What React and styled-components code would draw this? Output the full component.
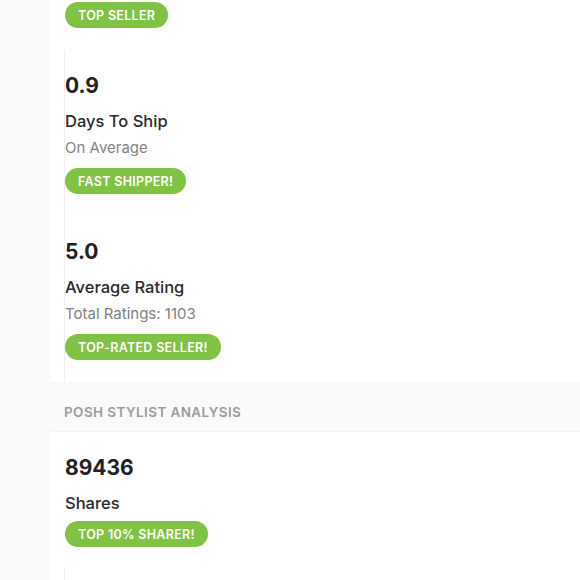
import React from "react";
import styled, { createGlobalStyle } from "styled-components";

const Global = createGlobalStyle`
  html, body { margin: 0; padding: 0; background: #fafafa; }
  body { font-family: Inter, "Open Sans", "Liberation Sans", sans-serif; color: #222; }
`;

const Page = styled.div`
  display: flex;
  min-height: 580px;
  overflow: hidden;
`;

const Gutter = styled.div`
  width: 50px;
  flex: none;
  background: #fafafa;
`;

const Main = styled.main`
  flex: 1;
  background: #fff;
  display: flex;
  flex-direction: column;
`;

const StatList = styled.div`
  display: flex;
  flex-direction: column;
  padding-left: 14px;
`;

const Stat = styled.div`
  display: flex;
  flex-direction: column;
  align-items: flex-start;
  padding: ${(p) => (p.$partial ? "2px 0 22px" : "22px 0")};
  border-left: 1px solid ${(p) => (p.$divider ? "#eeeeee" : "transparent")};
`;

const Value = styled.div`
  font-size: 21px;
  line-height: 28px;
  font-weight: 700;
  color: #222;
`;

const Label = styled.div`
  margin-top: 9px;
  font-size: 16.5px;
  line-height: 24px;
  font-weight: 500;
  color: #2a2a2a;
`;

const Sub = styled.div`
  margin-top: 5px;
  font-size: 15px;
  line-height: 20px;
  color: #808080;
`;

const Badge = styled.span`
  margin-top: ${(p) => p.$gap}px;
  display: inline-flex;
  align-items: center;
  height: 26px;
  padding: 0 13px;
  border-radius: 13px;
  background: #7fc244;
  color: #fff;
  font-size: 12.5px;
  font-weight: 600;
  letter-spacing: 0.3px;
  text-transform: uppercase;
  white-space: nowrap;
`;

const SectionHeader = styled.h2`
  margin: 0;
  height: 50px;
  box-sizing: border-box;
  padding: 19px 14px 0;
  background: #fafafa;
  border-top: 1px solid #f3f3f3;
  border-bottom: 1px solid #f3f3f3;
  font-size: 13.5px;
  line-height: 20px;
  font-weight: 600;
  letter-spacing: 0.4px;
  color: #9b9b9b;
  text-transform: uppercase;
`;

export default function App() {
  return (
    <>
      <Global />
      <Page>
        <Gutter />
        <Main>
          <StatList>
            <Stat $partial>
              <Badge $gap={0}>Top Seller</Badge>
            </Stat>
            <Stat $divider>
              <Value>0.9</Value>
              <Label>Days To Ship</Label>
              <Sub>On Average</Sub>
              <Badge $gap={10}>Fast Shipper!</Badge>
            </Stat>
            <Stat $divider>
              <Value>5.0</Value>
              <Label>Average Rating</Label>
              <Sub>Total Ratings: 1103</Sub>
              <Badge $gap={10}>Top-Rated Seller!</Badge>
            </Stat>
          </StatList>
          <SectionHeader>Posh Stylist Analysis</SectionHeader>
          <StatList>
            <Stat>
              <Value>89436</Value>
              <Label>Shares</Label>
              <Badge $gap={6}>Top 10% Sharer!</Badge>
            </Stat>
            <Stat $divider>
              <Value>&nbsp;</Value>
            </Stat>
          </StatList>
        </Main>
      </Page>
    </>
  );
}
